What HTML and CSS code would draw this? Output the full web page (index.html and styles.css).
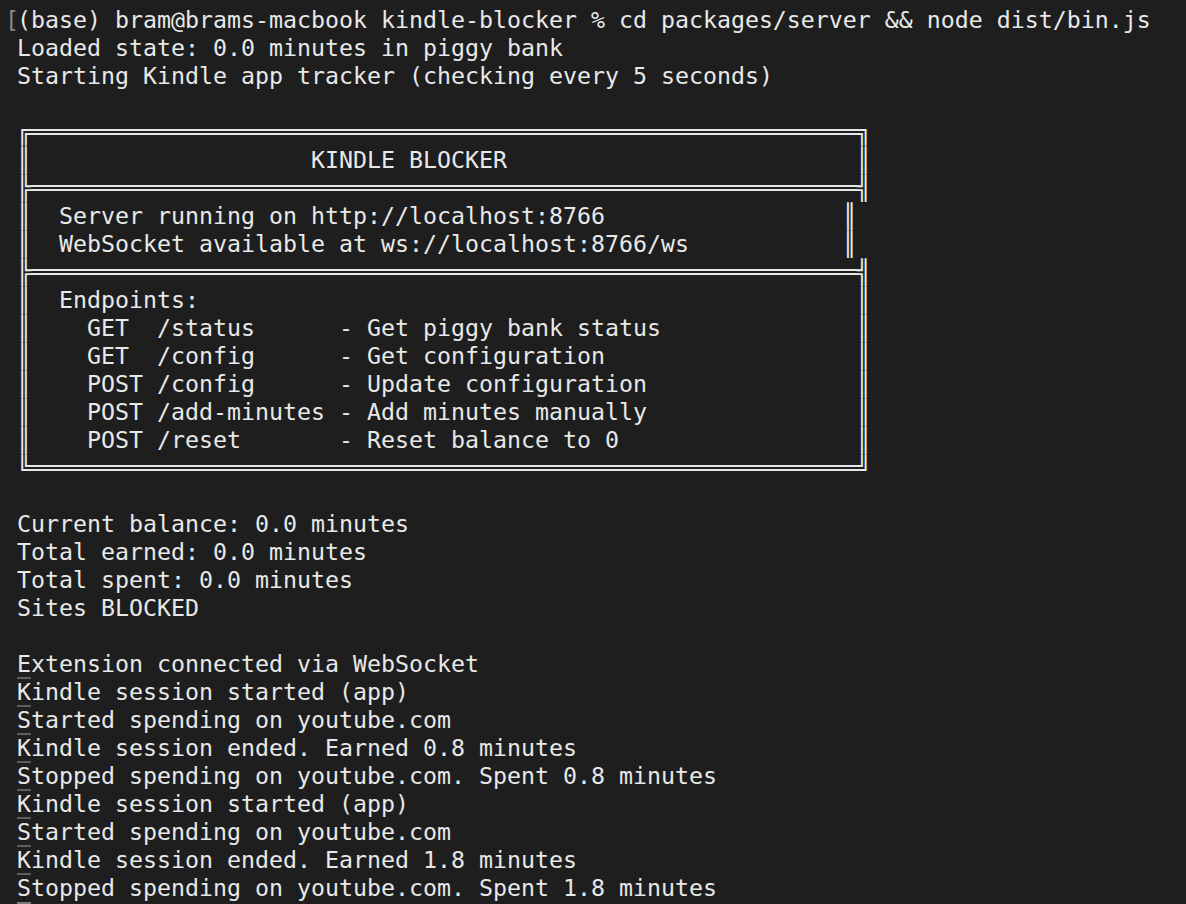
FILE: index.html
```html
<!DOCTYPE html>
<html lang="en">
<head>
<meta charset="utf-8">
<title>Terminal — kindle-blocker</title>
<link rel="stylesheet" href="styles.css">
</head>
<body>
<main class="term">
<div class="line"><span class="gutter">[</span>(base) bram@brams-macbook kindle-blocker % cd packages/server &amp;&amp; node dist/bin.js</div>
<div class="line">Loaded state: 0.0 minutes in piggy bank</div>
<div class="line">Starting Kindle app tracker (checking every 5 seconds)</div>
<div class="line"> </div>
<div class="line">╔═══════════════════════════════════════════════════════════╗</div>
<div class="line">║<span class="cell">                    KINDLE BLOCKER</span>║</div>
<div class="line">╠═══════════════════════════════════════════════════════════╣</div>
<div class="line">║<span class="cell short">  Server running on http://localhost:8766</span>║</div>
<div class="line">║<span class="cell short">  WebSocket available at ws://localhost:8766/ws</span>║</div>
<div class="line">╠═══════════════════════════════════════════════════════════╣</div>
<div class="line">║<span class="cell">  Endpoints:</span>║</div>
<div class="line">║<span class="cell">    GET  /status      - Get piggy bank status</span>║</div>
<div class="line">║<span class="cell">    GET  /config      - Get configuration</span>║</div>
<div class="line">║<span class="cell">    POST /config      - Update configuration</span>║</div>
<div class="line">║<span class="cell">    POST /add-minutes - Add minutes manually</span>║</div>
<div class="line">║<span class="cell">    POST /reset       - Reset balance to 0</span>║</div>
<div class="line">╚═══════════════════════════════════════════════════════════╝</div>
<div class="line"> </div>
<div class="line">Current balance: 0.0 minutes</div>
<div class="line">Total earned: 0.0 minutes</div>
<div class="line">Total spent: 0.0 minutes</div>
<div class="line">Sites BLOCKED</div>
<div class="line"> </div>
<div class="line">Extension connected via WebSocket</div>
<div class="line marked">Kindle session started (app)</div>
<div class="line marked">Started spending on youtube.com</div>
<div class="line marked">Kindle session ended. Earned 0.8 minutes</div>
<div class="line marked">Stopped spending on youtube.com. Spent 0.8 minutes</div>
<div class="line marked">Kindle session started (app)</div>
<div class="line marked">Started spending on youtube.com</div>
<div class="line marked">Kindle session ended. Earned 1.8 minutes</div>
<div class="line marked">Stopped spending on youtube.com. Spent 1.8 minutes</div>
<div class="line"><span class="cursor"> </span></div>
</main>
</body>
</html>
```

FILE: styles.css
```css
html, body {
  margin: 0;
  padding: 0;
  height: 100%;
  overflow: hidden;
  background: #1e1e1e;
}

.term {
  padding: 6px 0 0 17px;
  font-family: "DejaVu Sans Mono", "Liberation Mono", monospace;
  font-size: 23.254px;
  line-height: 28px;
  color: #e8e8e8;
}

.line {
  position: relative;
  white-space: pre;
  height: 28px;
}

.cell {
  display: inline-block;
  width: 59ch;
  white-space: pre;
}

.cell.short {
  width: 58ch;
}

.gutter {
  position: absolute;
  left: -12px;
  top: 0;
  color: #8a8a8a;
}

.marked::before {
  content: "";
  position: absolute;
  left: 0;
  top: -1px;
  width: 14px;
  height: 2px;
  background: #5e5e5e;
}

.cursor {
  display: inline-block;
  width: 14px;
  height: 26px;
  vertical-align: top;
  background: #7a7a7a;
}
```
